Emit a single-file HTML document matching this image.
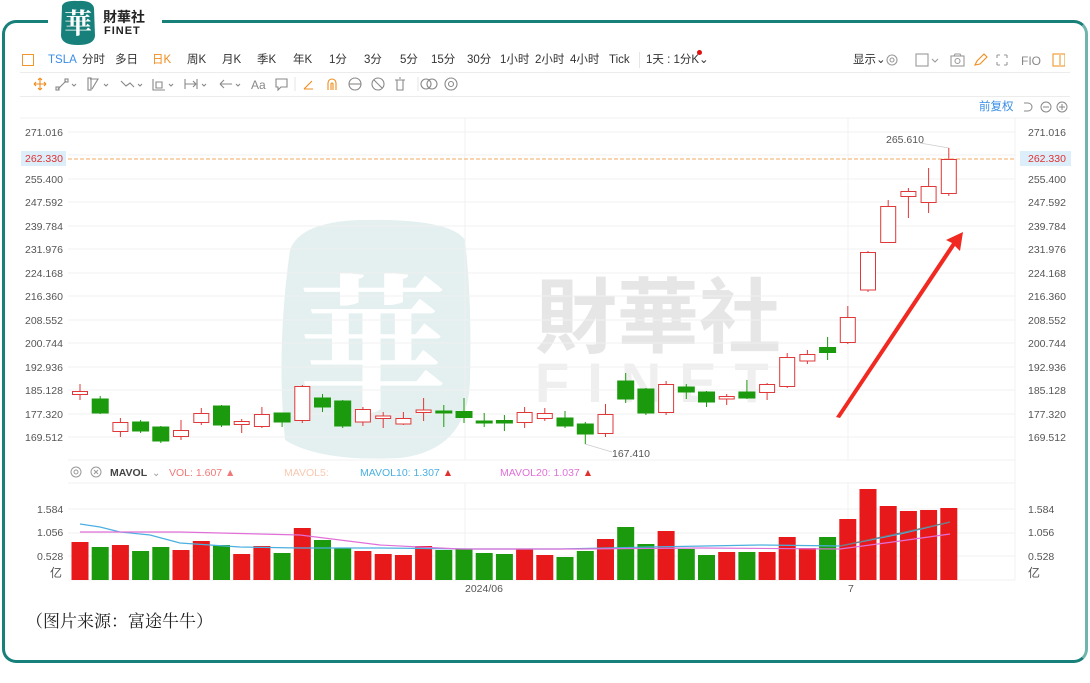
<!DOCTYPE html>
<html><head><meta charset="utf-8"><style>
*{margin:0;padding:0;box-sizing:border-box}
body{width:1090px;height:683px;background:#fff;position:relative;overflow:hidden;font-family:"Liberation Sans","Noto Sans CJK SC",sans-serif;}
.frame{position:absolute;left:2px;top:20px;width:1086px;height:643px;border:3px solid #17807a;border-radius:14px;border-right-color:#6fb5ae;border-top-color:#188079}
.gap{position:absolute;left:48px;top:14px;width:114px;height:14px;background:#fff}
.t{position:absolute;font-size:11.5px;color:#333;white-space:nowrap;line-height:14px}
.ax{font-size:10.5px;fill:#555;font-family:"Liberation Sans",sans-serif}
</style></head><body>
<div class="frame"></div>
<div class="gap"></div>
<!-- logo -->
<svg style="position:absolute;left:58px;top:0" width="40" height="46"><path d="M4 6 Q6 0 20 1 Q34 0 36 8 L37 36 Q36 45 20 45 Q4 45 3 36 Z" fill="#17807a"/><text x="20" y="33" text-anchor="middle" font-size="28" fill="#fff" font-family="Noto Serif CJK SC,serif" font-weight="bold">華</text></svg>
<div class="t" style="left:103px;top:10px;font-size:14px;font-weight:bold;color:#222">財華社</div>
<div class="t" style="left:104px;top:24px;font-size:11px;font-weight:bold;color:#222;letter-spacing:1px">FINET</div>

<!-- toolbar row1 -->
<div style="position:absolute;left:22px;top:54px;width:12px;height:12px;border:1.5px solid #f0962a"></div>
<div class="t" style="left:48px;top:53px;color:#3a8ee6">TSLA</div>
<div class="t" style="left:82px;top:53px">分时</div>
<div class="t" style="left:115px;top:53px">多日</div>
<div class="t" style="left:152px;top:53px;color:#f08c1e">日K</div>
<div class="t" style="left:187px;top:53px">周K</div>
<div class="t" style="left:222px;top:53px">月K</div>
<div class="t" style="left:257px;top:53px">季K</div>
<div class="t" style="left:293px;top:53px">年K</div>
<div class="t" style="left:329px;top:53px">1分</div>
<div class="t" style="left:364px;top:53px">3分</div>
<div class="t" style="left:400px;top:53px">5分</div>
<div class="t" style="left:431px;top:53px">15分</div>
<div class="t" style="left:467px;top:53px">30分</div>
<div class="t" style="left:500px;top:53px">1小时</div>
<div class="t" style="left:535px;top:53px">2小时</div>
<div class="t" style="left:570px;top:53px">4小时</div>
<div class="t" style="left:609px;top:53px">Tick</div>
<div style="position:absolute;left:639px;top:52px;width:1px;height:16px;background:#e6e6e6"></div>
<div class="t" style="left:646px;top:53px">1天 : 1分K⌄</div>
<div style="position:absolute;left:697px;top:50px;width:5px;height:5px;border-radius:50%;background:#e01010"></div>
<div class="t" style="left:853px;top:53px">显示⌄</div>
<svg style="position:absolute;left:885px;top:52px" width="180" height="16" fill="none" stroke="#999" stroke-width="1.1">
<circle cx="7" cy="8" r="5"/><circle cx="7" cy="8" r="2"/>
<rect x="31" y="2" width="12" height="12"/><path d="M47 7l3 3 3-3"/>
<rect x="66" y="4" width="13" height="10"/><circle cx="72.5" cy="9" r="2.5"/><path d="M69 4l1-2h5l1 2"/>
<path d="M90 13l2-4 7-7 3 3-7 7z" stroke="#f08c1e"/>
<path d="M112 3h3M112 3v3M122 3h-3M122 3v3M112 13h3M112 13v-3M122 13h-3M122 13v-3"/>
<text x="136" y="13" font-size="12" fill="#888" stroke="none" font-family="Liberation Sans">FIO</text>
<rect x="168" y="2" width="12" height="12" stroke="#f0962a"/><path d="M175 3v10" stroke="#f0962a"/>
</svg>
<div style="position:absolute;left:20px;top:72px;width:1050px;height:1px;background:#ececec"></div>
<!-- toolbar row2 -->
<svg style="position:absolute;left:30px;top:76px" width="440" height="16" fill="none" stroke="#888" stroke-width="1.1">
<path d="M10 2v12M4 8h12M10 2l-2 2M10 2l2 2M10 14l-2-2M10 14l2-2M4 8l2-2M4 8l2 2M16 8l-2-2M16 8l-2 2" stroke="#f08c1e"/>
<path d="M28 13l8-8"/><rect x="26" y="11" width="3" height="3"/><rect x="35" y="3" width="3" height="3"/><path d="M42 8l2 2 2-2"/>
<path d="M60 3h8l-6 10" /><rect x="58" y="2" width="3" height="12"/><path d="M74 8l2 2 2-2"/>
<path d="M91 5l5 5 4-3 4 4"/><path d="M108 8l2 2 2-2"/>
<path d="M123 3v11h12M126 6h6v6h-6z"/><path d="M139 8l2 2 2-2"/>
<path d="M155 3v10M167 3v10M155 8h12M163 5l3 3-3 3"/><path d="M172 8l2 2 2-2"/>
<path d="M190 8h12M190 8l4-4M190 8l4 4"/><path d="M206 8l2 2 2-2"/>
<text x="221" y="13" font-size="12" fill="#888" stroke="none" font-family="Liberation Sans">Aa</text>
<path d="M246 3h11v8h-6l-3 3v-3h-2z"/>
<path d="M265 1v14" stroke="#e6e6e6"/>
<path d="M274 13l8-8M274 13h9" stroke="#f08c1e"/>
<path d="M298 14V7a4 4 0 0 1 8 0v7M301 14V8a1 1 0 0 1 2 0v6" stroke="#f08c1e"/>
<circle cx="325" cy="8" r="6"/><path d="M319 8h12"/>
<circle cx="348" cy="8" r="6"/><path d="M344 4l8 8"/>
<path d="M365 4h10M367 4v10h6V4M369 2h2"/>
<path d="M388 1v14" stroke="#e6e6e6"/>
<circle cx="396" cy="8" r="5"/><circle cx="402" cy="8" r="5"/>
<circle cx="421" cy="8" r="6"/><circle cx="421" cy="8" r="2.5"/>
</svg>
<div style="position:absolute;left:20px;top:96px;width:1050px;height:1px;background:#ececec"></div>
<div class="t" style="left:979px;top:100px;color:#3a8ee6">前复权</div>
<svg style="position:absolute;left:1021px;top:100px" width="50" height="14" fill="none" stroke="#888" stroke-width="1"><path d="M3 3h4a4 4 0 0 1 0 8H3"/><circle cx="25" cy="7" r="5"/><path d="M22 7h6"/><circle cx="41" cy="7" r="5"/><path d="M38 7h6M41 4v6"/></svg>

<svg style="position:absolute;left:0;top:0" width="1090" height="683">
<!-- watermark -->
<path d="M290 250 Q300 222 360 220 Q450 218 465 240 Q472 300 470 380 Q468 450 400 458 Q320 462 285 440 Q276 350 290 250Z" fill="#e3f0ef"/>
<text x="372" y="400" text-anchor="middle" font-size="150" fill="#fff" font-family="Noto Serif CJK SC,serif" font-weight="bold">華</text>
<text x="535" y="346" font-size="82" fill="#e6e6e6" font-family="Noto Sans CJK SC,sans-serif" font-weight="bold">財華社</text>
<text x="535" y="402" font-size="56" fill="#efefef" font-family="Liberation Sans" font-weight="bold" letter-spacing="18">FINET</text>
<!-- grid -->
<g stroke="#f0f0f0" stroke-width="1">
<path d="M20 118H1070M68 132H1015M68 155H1015M68 179H1015M68 202H1015M68 226H1015M68 249H1015M68 273H1015M68 296H1015M68 320H1015M68 343H1015M68 367H1015M68 390H1015M68 414H1015M68 437H1015M68 460H1015"/>
<path d="M465 118V460M848 118V460M465 483V580M848 483V580M1015 118V580M68 483H1015M68 509H1015M68 533H1015M68 556H1015M68 580H1015"/>
</g>
<path d="M68 159H1015" stroke="#f0a860" stroke-dasharray="4,2"/>
<!-- axis labels -->
<g class="ax">
<text x="25" y="136">271.016</text><text x="25" y="183">255.400</text><text x="25" y="206">247.592</text><text x="25" y="230">239.784</text><text x="25" y="253">231.976</text><text x="25" y="277">224.168</text><text x="25" y="300">216.360</text><text x="25" y="324">208.552</text><text x="25" y="347">200.744</text><text x="25" y="371">192.936</text><text x="25" y="394">185.128</text><text x="25" y="418">177.320</text><text x="25" y="441">169.512</text>
<text x="1028" y="136">271.016</text><text x="1028" y="183">255.400</text><text x="1028" y="206">247.592</text><text x="1028" y="230">239.784</text><text x="1028" y="253">231.976</text><text x="1028" y="277">224.168</text><text x="1028" y="300">216.360</text><text x="1028" y="324">208.552</text><text x="1028" y="347">200.744</text><text x="1028" y="371">192.936</text><text x="1028" y="394">185.128</text><text x="1028" y="418">177.320</text><text x="1028" y="441">169.512</text>
<text x="37" y="513">1.584</text><text x="37" y="536">1.056</text><text x="37" y="560">0.528</text><text x="50" y="577" font-size="12">亿</text>
<text x="1028" y="513">1.584</text><text x="1028" y="536">1.056</text><text x="1028" y="560">0.528</text><text x="1028" y="577" font-size="12">亿</text>
<text x="465" y="592">2024/06</text><text x="848" y="592">7</text>
<text x="886" y="143">265.610</text><text x="612" y="457">167.410</text>
</g>
<rect x="21" y="151" width="45" height="15" fill="#ddeefb"/><text x="25" y="162" class="ax" style="fill:#e03030">262.330</text>
<rect x="1020" y="151" width="51" height="15" fill="#ddeefb"/><text x="1028" y="162" class="ax" style="fill:#e03030">262.330</text>
<path d="M585 444L612 452M920 143L949 148" stroke="#ccc" stroke-width="0.8"/>
<!-- candles -->
<g stroke-width="1">
<g stroke="#e03838" fill="#fff">
<path d="M80 384V400M120.4 418V437M181 420V440M201.3 408V425M241.7 419V433M261.9 407V428M302.3 385V423M362.9 407V426M383.2 412V428M403.4 412V425M423.6 398V421M524.6 407V428M544.8 408V421M605.5 404V437M666.1 381V415M726.7 394V405M767.1 383V400M787.2 353V388M807.4 350V364M847.8 306V344M868 251V292M888.2 200V243M908.4 188V218M928.6 168V213M948.8 148V196"/>
<rect x="72.5" y="391.5" width="15" height="3"/><rect x="112.9" y="422.5" width="15" height="9"/><rect x="173.5" y="430.5" width="15" height="6"/><rect x="193.8" y="413.5" width="15" height="9"/><rect x="234.2" y="421.5" width="15" height="3"/><rect x="254.4" y="414.5" width="15" height="12"/><rect x="294.8" y="386.5" width="15" height="34"/><rect x="355.4" y="409.5" width="15" height="12.5"/><rect x="375.7" y="416" width="15" height="2.5"/><rect x="395.9" y="418.5" width="15" height="5.5"/><rect x="416.1" y="410" width="15" height="2.5"/><rect x="517.1" y="412.5" width="15" height="10"/><rect x="537.3" y="413.5" width="15" height="5"/><rect x="598" y="414.5" width="15" height="19"/><rect x="658.6" y="384.5" width="15" height="28"/><rect x="719.2" y="396.5" width="15" height="2.5"/><rect x="759.6" y="384.5" width="15" height="8"/><rect x="779.7" y="357.5" width="15" height="29"/><rect x="799.9" y="354.5" width="15" height="6.5"/><rect x="840.3" y="317.5" width="15" height="25"/><rect x="860.5" y="252.5" width="15" height="37.5"/><rect x="880.7" y="206.5" width="15" height="36"/><rect x="900.9" y="191.5" width="15" height="5"/><rect x="921.1" y="186.5" width="15" height="16"/><rect x="941.3" y="159.5" width="15" height="34"/>
</g>
<g stroke="#1a9a0c" fill="#1a9a0c">
<path d="M100.2 396V414M140.6 420V433M160.8 426V443M221.5 405V427M282.1 413V427M322.5 394V412M342.7 400V428M443.8 405V427M464 398V423M484.2 413V427M504.4 415V431M565 411V428M585.3 422V444M625.7 373V403M645.9 388V415M686.3 384V399M706.5 391V407M746.9 380V399M827.6 337V360"/>
<rect x="92.2" y="399" width="16" height="14"/><rect x="132.6" y="422" width="16" height="9"/><rect x="152.8" y="427" width="16" height="14"/><rect x="213.5" y="406" width="16" height="19"/><rect x="274.1" y="413" width="16" height="9"/><rect x="314.5" y="398" width="16" height="9"/><rect x="334.7" y="401" width="16" height="25"/><rect x="435.8" y="411" width="16" height="2"/><rect x="456" y="411.5" width="16" height="6"/><rect x="476.2" y="421" width="16" height="2"/><rect x="496.4" y="420.5" width="16" height="2.5"/><rect x="557" y="418" width="16" height="8"/><rect x="577.3" y="424" width="16" height="10"/><rect x="617.7" y="381" width="16" height="18"/><rect x="637.9" y="389" width="16" height="24"/><rect x="678.3" y="387" width="16" height="5"/><rect x="698.5" y="392" width="16" height="10"/><rect x="738.9" y="392" width="16" height="6"/><rect x="819.6" y="347.5" width="16" height="5"/>
</g>
</g>
<!-- arrow -->
<path d="M836 417L952 243L946 240L963 232L960 251L955 246L840 418Z" fill="#f02a20"/>
<!-- legend -->
<g fill="none" stroke="#999"><circle cx="76" cy="472" r="5"/><circle cx="76" cy="472" r="2"/><circle cx="96" cy="472" r="5"/><path d="M94 470l4 4M98 470l-4 4"/></g>
<text x="110" y="476" font-size="10.5" fill="#444" font-weight="bold">MAVOL</text>
<text x="152" y="476" font-size="10" fill="#999">⌄</text>
<text x="169" y="476" font-size="10.5" fill="#f07878">VOL: 1.607 ▲</text>
<text x="284" y="476" font-size="10.5" fill="#f8c8b0">MAVOL5:</text>
<text x="360" y="476" font-size="10.5" fill="#4ab0e0">MAVOL10: 1.307 <tspan fill="#e03030">▲</tspan></text>
<text x="500" y="476" font-size="10.5" fill="#e070d8">MAVOL20: 1.037 <tspan fill="#e03030">▲</tspan></text>
<!-- volume bars -->
<g fill="#e8191a">
<rect x="71.5" y="542" width="17" height="38"/><rect x="111.9" y="545" width="17" height="35"/><rect x="172.5" y="550" width="17" height="30"/><rect x="192.8" y="541" width="17" height="39"/><rect x="233.2" y="554" width="17" height="26"/><rect x="253.4" y="546" width="17" height="34"/><rect x="293.8" y="528" width="17" height="52"/><rect x="354.4" y="551" width="17" height="29"/><rect x="374.7" y="554" width="17" height="26"/><rect x="394.9" y="555" width="17" height="25"/><rect x="415.1" y="546" width="17" height="34"/><rect x="516.1" y="549" width="17" height="31"/><rect x="536.3" y="555" width="17" height="25"/><rect x="597" y="539" width="17" height="41"/><rect x="657.6" y="531" width="17" height="49"/><rect x="718.2" y="552" width="17" height="28"/><rect x="758.6" y="552" width="17" height="28"/><rect x="778.7" y="537" width="17" height="43"/><rect x="798.9" y="548" width="17" height="32"/><rect x="839.3" y="519" width="17" height="61"/><rect x="859.5" y="489" width="17" height="91"/><rect x="879.7" y="506" width="17" height="74"/><rect x="899.9" y="511" width="17" height="69"/><rect x="920.1" y="510" width="17" height="70"/><rect x="940.3" y="508" width="17" height="72"/>
</g>
<g fill="#1a9a0c">
<rect x="91.7" y="547" width="17" height="33"/><rect x="132.1" y="551" width="17" height="29"/><rect x="152.3" y="547" width="17" height="33"/><rect x="213" y="545" width="17" height="35"/><rect x="273.6" y="553" width="17" height="27"/><rect x="314" y="540" width="17" height="40"/><rect x="334.2" y="548" width="17" height="32"/><rect x="435.3" y="550" width="17" height="30"/><rect x="455.5" y="549" width="17" height="31"/><rect x="475.7" y="553" width="17" height="27"/><rect x="495.9" y="554" width="17" height="26"/><rect x="556.5" y="557" width="17" height="23"/><rect x="576.8" y="551" width="17" height="29"/><rect x="617.2" y="527" width="17" height="53"/><rect x="637.4" y="544" width="17" height="36"/><rect x="677.8" y="549" width="17" height="31"/><rect x="698" y="555" width="17" height="25"/><rect x="738.4" y="552" width="17" height="28"/><rect x="819.1" y="537" width="17" height="43"/>
</g>
<path d="M80 524L100 527L120 532L150 535L180 543L240 547L300 548L380 548L470 549L560 549L650 547L760 545L840 546L900 534L950 522" fill="none" stroke="#4ab0e0" stroke-width="1.2"/>
<path d="M80 532L180 532L300 535L380 545L460 549L580 549L700 548L840 549L900 541L950 534" fill="none" stroke="#e070d8" stroke-width="1.2"/>
<path d="M840 546L900 533L950 522" fill="none" stroke="#777" stroke-width="1"/>
</svg>
<div class="t" style="left:26px;top:610px;font-size:17px;line-height:20px;color:#222;font-family:'Noto Serif CJK SC','Noto Sans CJK SC',serif">（图片来源：富途牛牛）</div>
</body></html>
